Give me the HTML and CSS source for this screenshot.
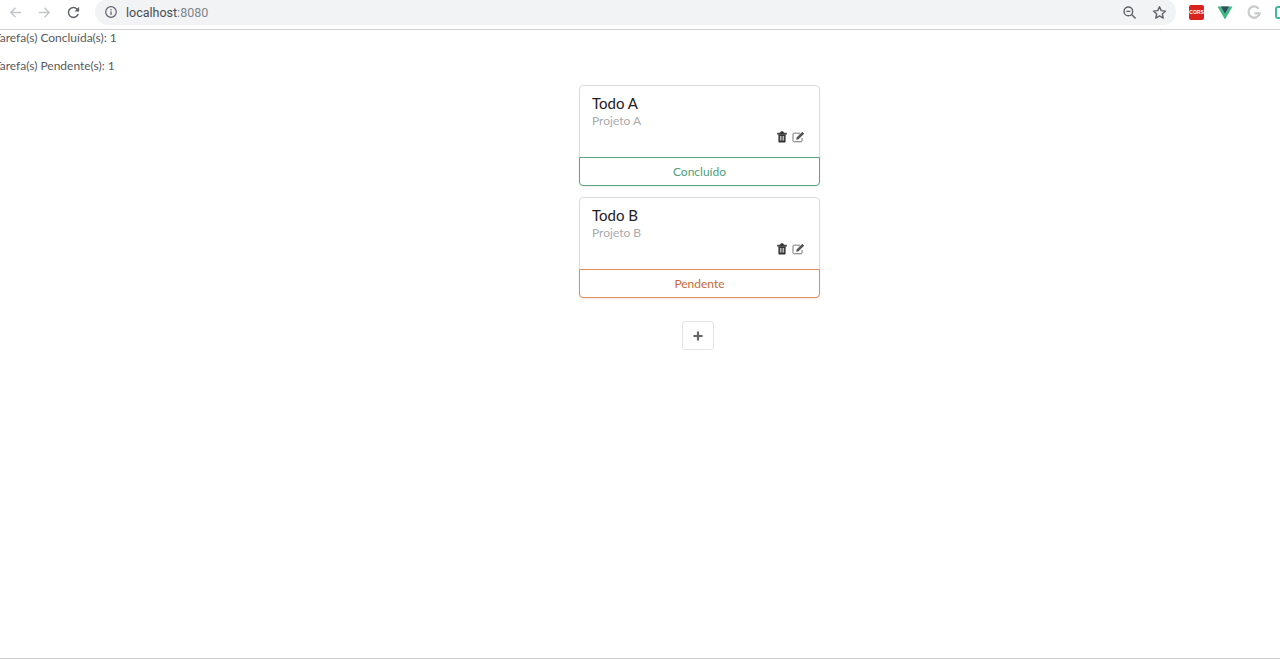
FILE: index.html
```html
<!DOCTYPE html>
<html lang="pt">
<head>
  <meta charset="UTF-8" />
  <title>Todo</title>
  <link rel="stylesheet" href="styles.css">
</head>
<body>

  <div class="toolbar">
    <div class="nav">
      <svg class="nav-icon" viewBox="0 0 16 16"><path d="M14 8H3M8 3L3 8l5 5" fill="none" stroke="#c4c7ca" stroke-width="1.6"/></svg>
      <svg class="nav-icon" viewBox="0 0 16 16"><path d="M2 8h11M8 3l5 5-5 5" fill="none" stroke="#c4c7ca" stroke-width="1.6"/></svg>
      <svg class="nav-icon" viewBox="0 0 16 16"><path d="M13 9.5A5.3 5.3 0 1 1 11.7 4.2L13.5 6" fill="none" stroke="#5f6368" stroke-width="1.6"/><path d="M14 1.8v5h-5z" fill="#5f6368"/></svg>
    </div>
    <div class="omnibox">
      <svg class="info-icon" viewBox="0 0 14 14"><circle cx="7" cy="7" r="5.3" fill="none" stroke="#5f6368" stroke-width="1.2"/><path d="M7 6.2v3.8M7 4v1.2" stroke="#5f6368" stroke-width="1.2"/></svg>
      <span class="url">localhost<span class="url-port">:8080</span></span>
      <div class="omnibox-actions">
        <svg class="omni-icon" viewBox="0 0 16 16"><circle cx="6.8" cy="6.8" r="4.6" fill="none" stroke="#5f6368" stroke-width="1.5"/><path d="M10.2 10.2L14.5 14.5M4.6 6.8h4.4" stroke="#5f6368" stroke-width="1.5"/></svg>
        <svg class="omni-icon" viewBox="0 0 16 16"><path d="M8 1.8l1.9 4.2 4.5.5-3.4 3 1 4.5L8 11.7l-4 2.3 1-4.5-3.4-3 4.5-.5z" fill="none" stroke="#5f6368" stroke-width="1.5" stroke-linejoin="round"/></svg>
      </div>
    </div>
    <div class="extensions">
      <span class="ext-cors">CORS</span>
      <svg class="ext-icon" viewBox="0 0 16 14"><path d="M0.5 1h15L8 14z" fill="#41b883"/><path d="M4 1h8L8 8z" fill="#35495e"/></svg>
      <svg class="ext-icon" viewBox="0 0 16 16"><path d="M13 4A6 6 0 1 0 14 9H8.5" fill="none" stroke="#c8cacc" stroke-width="2.4"/></svg>
      <span class="ext-cut"></span>
    </div>
  </div>

  <div class="summary">
    <p>Tarefa(s) Concluída(s): 1</p>
    <p>Tarefa(s) Pendente(s): 1</p>
  </div>

  <div class="lista">
    <div class="card">
      <div class="card-body">
        <div class="card-title">Todo A</div>
        <div class="card-meta">Projeto A</div>
        <div class="card-actions">
          <svg class="acao-icon lixo" viewBox="0 0 10 12"><path d="M0.5 2.2h9v1h-9zM3.4 2.2l.5-1.5h2.2l.5 1.5" fill="#333" stroke="#333" stroke-width=".7"/><path d="M1.4 3.4h7.2v7.2q0 .9-.9.9H2.3q-.9 0-.9-.9z" fill="#333"/><path d="M3.4 5v4.6M5 5v4.6M6.6 5v4.6" stroke="#fff" stroke-width=".7"/></svg>
          <svg class="acao-icon editar" viewBox="0 0 13 12"><path d="M10 7v2.8q0 1-1 1H2q-1 0-1-1V3.2q0-1 1-1h6" fill="none" stroke="#777" stroke-width="1"/><path d="M4.6 6.4L10.3.8l1.9 1.9-5.7 5.6-2.3.4z" fill="#555"/></svg>
        </div>
      </div>
      <div class="status status-ok">Concluído</div>
    </div>

    <div class="card">
      <div class="card-body">
        <div class="card-title">Todo B</div>
        <div class="card-meta">Projeto B</div>
        <div class="card-actions">
          <svg class="acao-icon lixo" viewBox="0 0 10 12"><path d="M0.5 2.2h9v1h-9zM3.4 2.2l.5-1.5h2.2l.5 1.5" fill="#333" stroke="#333" stroke-width=".7"/><path d="M1.4 3.4h7.2v7.2q0 .9-.9.9H2.3q-.9 0-.9-.9z" fill="#333"/><path d="M3.4 5v4.6M5 5v4.6M6.6 5v4.6" stroke="#fff" stroke-width=".7"/></svg>
          <svg class="acao-icon editar" viewBox="0 0 13 12"><path d="M10 7v2.8q0 1-1 1H2q-1 0-1-1V3.2q0-1 1-1h6" fill="none" stroke="#777" stroke-width="1"/><path d="M4.6 6.4L10.3.8l1.9 1.9-5.7 5.6-2.3.4z" fill="#555"/></svg>
        </div>
      </div>
      <div class="status status-pendente">Pendente</div>
    </div>

    <button class="novo">
      <svg class="novo-icon" viewBox="0 0 10 10"><path d="M5 .5v9M.5 5h9" stroke="#666" stroke-width="2.2"/></svg>
    </button>
  </div>

  <div class="rodape"></div>

</body>
</html>
```

FILE: styles.css
```css
body {
  margin: 0;
  height: 659px;
  overflow: hidden;
  display: flex;
  flex-direction: column;
  background-color: #fff;
  font-family: "Lato", sans-serif;
  font-size: 12px;
  color: #5a5a5a;
}

/* barra do navegador */
.toolbar {
  height: 29px;
  flex: none;
  display: flex;
  align-items: center;
  border-bottom: 1px solid #cfcfcf;
  overflow: hidden;
}
.nav {
  display: flex;
  flex: none;
  gap: 14px;
  padding-left: 8px;
  width: 95px;
  box-sizing: border-box;
  margin-top: -4px;
}
.nav-icon {
  width: 15px;
  height: 15px;
}
.omnibox {
  width: 1081px;
  flex: none;
  height: 26px;
  margin-top: -5px;
  box-sizing: border-box;
  background-color: #f1f3f4;
  border-radius: 13px;
  display: flex;
  align-items: center;
  padding: 0 9px 0 9px;
}
.info-icon {
  width: 14px;
  height: 14px;
  margin-right: 8px;
}
.url {
  font-family: "Roboto", sans-serif;
  font-size: 12.5px;
  color: #4a4e52;
}
.url-port {
  color: #80868b;
}
.omnibox-actions {
  margin-left: auto;
  display: flex;
  gap: 15px;
}
.omni-icon {
  width: 15px;
  height: 15px;
}
.extensions {
  display: flex;
  align-items: center;
  gap: 13px;
  padding-left: 13px;
  margin-top: -5px;
  flex: none;
}
.ext-cors {
  width: 15px;
  height: 15px;
  border-radius: 2px;
  background-color: #d8241c;
  color: #fff;
  font-family: "Liberation Sans", sans-serif;
  font-size: 5px;
  font-weight: bold;
  line-height: 15px;
  text-align: center;
}
.ext-icon {
  width: 16px;
  height: 15px;
}
.ext-cut {
  width: 12px;
  height: 13px;
  border: 2px solid #3fb6a0;
  border-radius: 3px;
  box-sizing: border-box;
}

/* resumo */
.summary {
  margin: -1px 0 0 -6px;
  flex: none;
}
.summary p {
  margin: 0 0 8px;
  height: 20px;
  line-height: 18px;
  white-space: nowrap;
}

/* cartoes */
.lista {
  flex: 1;
  width: 241px;
  margin-left: 579px;
}
.card {
  border: 1px solid #dcdcdc;
  border-radius: 4px;
  margin-bottom: 11px;
  background-color: #fff;
  box-shadow: 0 1px 2px rgba(0, 0, 0, 0.08);
}
.card-body {
  height: 63px;
  padding: 8px 12px 0;
}
.card-title {
  font-size: 15px;
  line-height: 18px;
  color: #222;
}
.card-meta {
  font-size: 12px;
  line-height: 16px;
  margin-top: 1px;
  color: #aaa;
}
.card-actions {
  display: flex;
  justify-content: flex-end;
  align-items: center;
  gap: 5px;
  padding-right: 2px;
  margin-top: 2px;
}
.acao-icon {
  height: 12px;
}
.lixo {
  width: 10px;
}
.editar {
  width: 13px;
}
.status {
  box-sizing: border-box;
  width: 241px;
  height: 29px;
  margin: 0 -1px -1px;
  background-color: #fff;
  border-radius: 0 0 4px 4px;
  font-size: 12px;
  line-height: 27px;
  text-align: center;
}
.status-ok {
  color: #4d9f7c;
  border: 1px solid #5ba585;
}
.status-pendente {
  color: #c8693a;
  border: 1px solid #e38d57;
}
.novo {
  display: flex;
  align-items: center;
  justify-content: center;
  width: 32px;
  height: 29px;
  margin: 23px 0 0 103px;
  padding: 0;
  background-color: #fff;
  border: 1px solid #e4e4e4;
  border-radius: 3px;
}
.novo-icon {
  width: 10px;
  height: 10px;
}
.rodape {
  height: 1px;
  flex: none;
  background-color: #cfcfcf;
}
```
